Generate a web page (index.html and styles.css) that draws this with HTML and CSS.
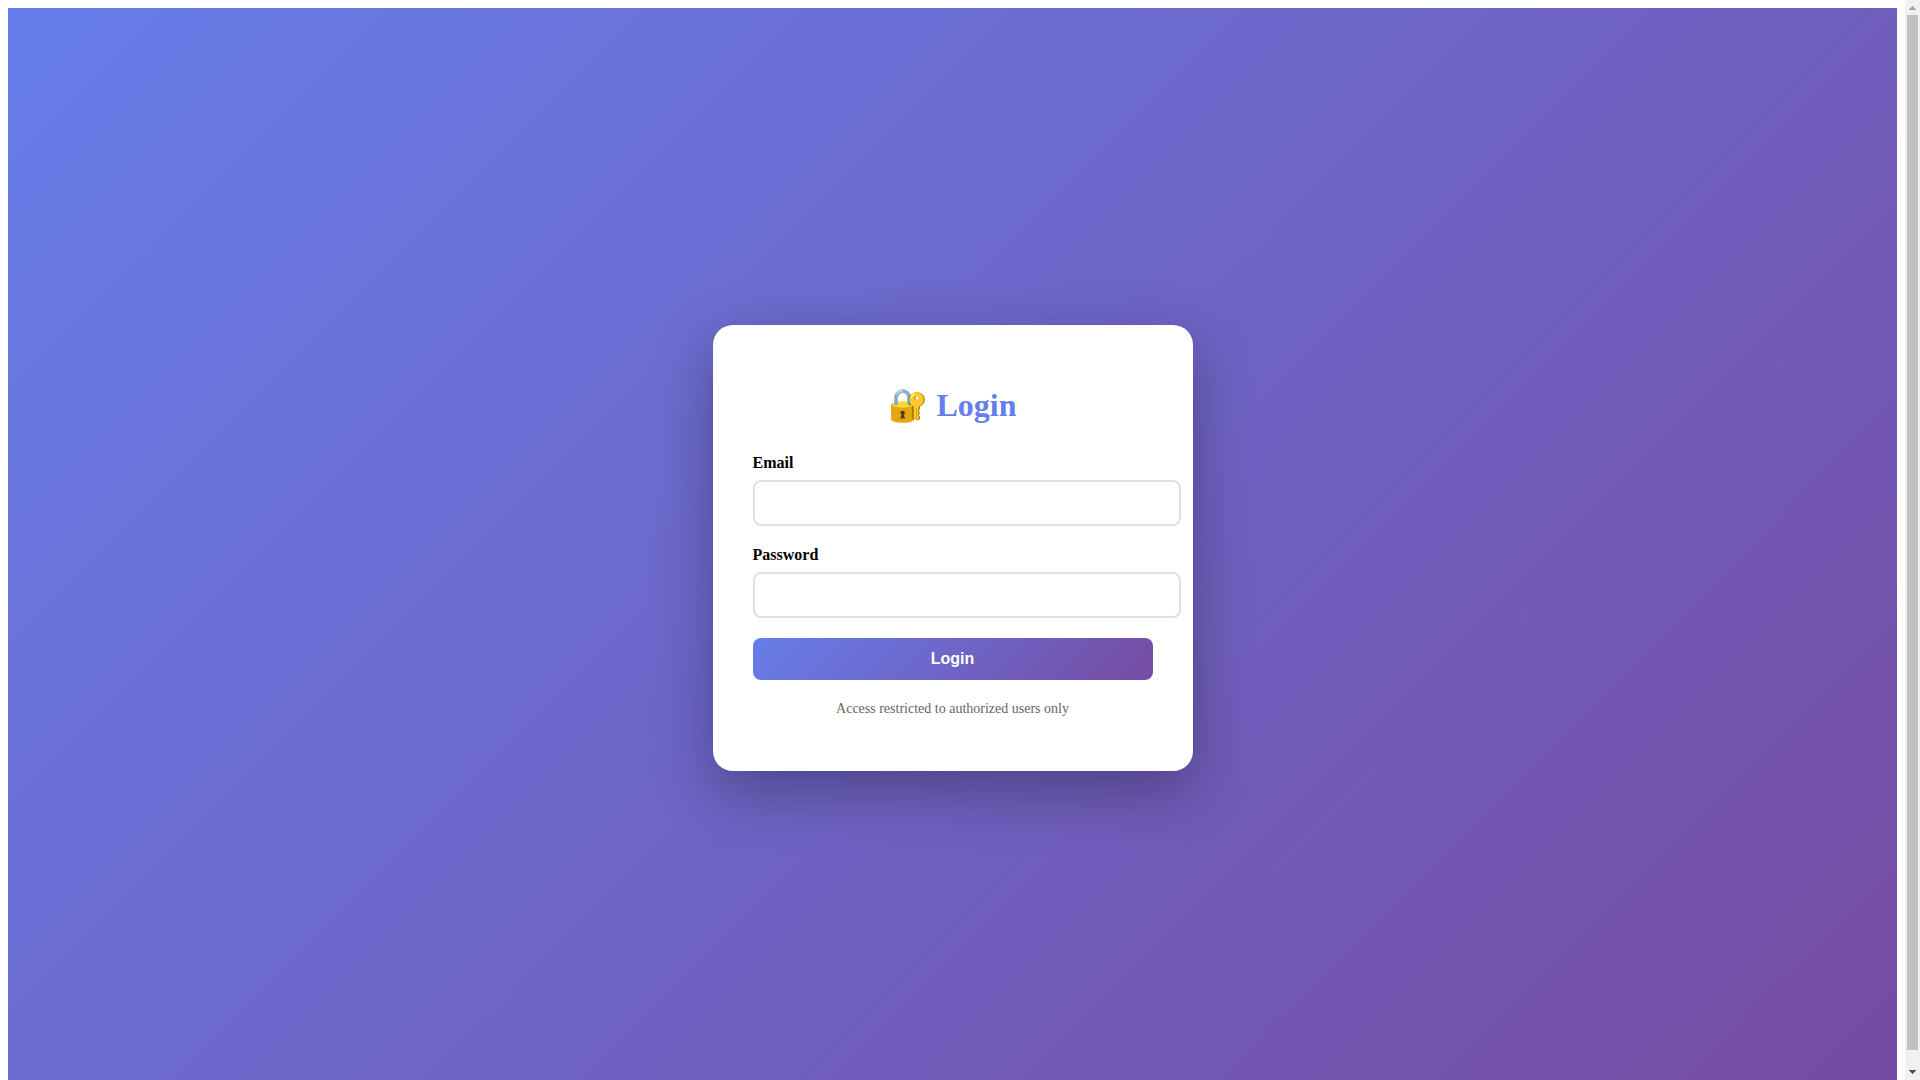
FILE: index.html
```html
<!DOCTYPE html>
<html lang="en">
<head>
  <meta charset="UTF-8" />
  <meta name="viewport" content="width=device-width, initial-scale=1" />
  <title>Login</title>
  <link rel="stylesheet" href="styles.css">
</head>
<body>
  <main class="login-page">
    <div class="login-card">
      <h1>🔐 Login</h1>
      <form class="login-form">
        <div class="form-group">
          <label for="email">Email</label>
          <input type="email" id="email" name="email" required>
        </div>
        <div class="form-group">
          <label for="password">Password</label>
          <input type="password" id="password" name="password" required>
        </div>
        <button type="submit" class="login-btn">Login</button>
      </form>
      <p class="login-note">Access restricted to authorized users only</p>
    </div>
  </main>
  <div class="scrollbar" aria-hidden="true">
    <svg class="scroll-arrow up" viewBox="0 0 15 15" shape-rendering="crispEdges">
      <path d="M7 6h1v1h1v1h1v1h1v1H4V9h1V8h1V7h1z"/>
    </svg>
    <div class="scroll-thumb"></div>
    <svg class="scroll-arrow down" viewBox="0 0 15 15" shape-rendering="crispEdges">
      <path d="M4 5h7v1h-1v1H9v1H8v1H7V8H6V7H5V6H4z"/>
    </svg>
  </div>
</body>
</html>
```
FILE: styles.css
```css
:root {
  --color-primary: #667eea;
  --color-secondary: #764ba2;
  --gradient: linear-gradient(135deg, var(--color-primary) 0%, var(--color-secondary) 100%);
}

html {
  scrollbar-width: none;
}

body {
  margin: 0;
  display: flex;
  align-items: flex-start;
  font-family: "Liberation Serif", "Times New Roman", serif;
}

.login-page {
  flex: 1;
  min-height: 100vh;
  margin: 8px;
  display: flex;
  align-items: center;
  justify-content: center;
  background: var(--gradient);
}

.login-card {
  width: 100%;
  max-width: 400px;
  padding: 40px;
  background: white;
  border-radius: 20px;
  box-shadow: 0 20px 60px rgba(0, 0, 0, 0.3);
}

h1 {
  margin: 21px 0 30px;
  font-size: 32px;
  text-align: center;
  color: var(--color-primary);
}

.form-group {
  margin-bottom: 20px;
}

label {
  display: block;
  margin-bottom: 8px;
  font-weight: 600;
}

input {
  width: 100%;
  padding: 12px;
  border: 2px solid #e0e0e0;
  border-radius: 8px;
  font-size: 16px;
}

.login-btn {
  width: 100%;
  padding: 12px;
  border: none;
  border-radius: 8px;
  background: var(--gradient);
  color: white;
  font-family: "Liberation Sans", Arial, sans-serif;
  font-size: 16px;
  font-weight: 600;
  cursor: pointer;
}

.login-note {
  margin: 20px 0 14px;
  font-size: 14px;
  line-height: 17px;
  text-align: center;
  color: #666;
}

/* Page scrollbar */
.scrollbar {
  position: sticky;
  top: 0;
  width: 15px;
  height: 100vh;
  display: flex;
  flex-direction: column;
  background: #f1f1f1;
}

.scroll-arrow {
  width: 15px;
  height: 15px;
}

.scroll-arrow.up {
  fill: #a3a3a3;
}

.scroll-arrow.down {
  fill: #505050;
}

.scroll-thumb {
  flex: 1;
  margin: 0 2px 15px;
  background: #c1c1c1;
}
```
